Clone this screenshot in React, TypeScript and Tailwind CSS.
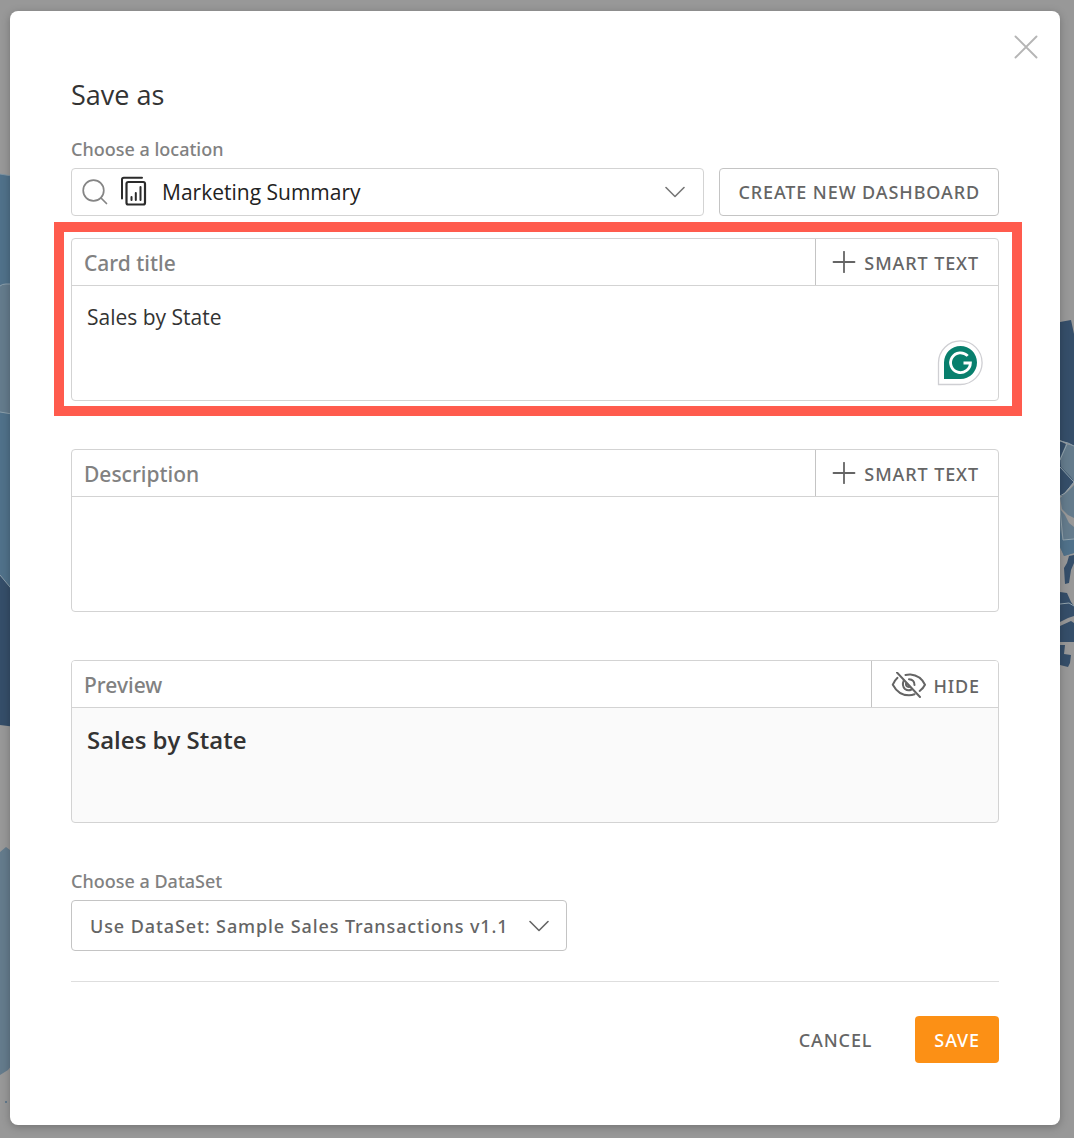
import React, { useState } from 'react';

function MapLeft() {
  return (
    <svg className="absolute left-0 top-0" width="24" height="1138" viewBox="0 0 24 1138" aria-hidden="true">
      <path d="M0 174 L24 178 V620 H0Z" fill="#50718a" />
      <path d="M0 174 L24 178" stroke="#7f95a3" />
      <path d="M0 286 Q2 284 6 284 H24 V416 L0 412Z" fill="#647b8c" />
      <path d="M0 286 Q2 284 6 284 H24 M0 412 L24 416" fill="none" stroke="#8b9eaa" strokeWidth="1" />
      <path d="M0 575 L24 604 V728 L0 725Z" fill="#354e69" />
      <path d="M0 575 L24 604" stroke="#8b9eaa" />
      <path d="M0 852 L6 847 L10 850 L24 853 V1050 L8 1070 L0 1075Z" fill="#647b8c" />
      <circle cx="6" cy="1102" r="1" fill="#50718a" />
    </svg>
  );
}

function MapRight() {
  return (
    <svg className="absolute right-0 top-0" width="24" height="1138" viewBox="0 0 24 1138" aria-hidden="true">
      <path d="M0 326 L10 322 L21 320 L24 334 V446 L10 440 H0Z" fill="#354e69" />
      <path d="M0 440 L10 441 L16 444 L14 452 L24 482 L12 496 H0Z" fill="#354e69" />
      <path d="M16 444 L24 446 V481 L20 476 L11 467 L10 458Z" fill="#647b8c" />
      <path d="M24 485 L17 492 L10 498 L12 509 L18 515 L24 518Z" fill="#647b8c" />
      <path d="M10 509 L15 515 L19 523 L24 527 V553 L14 556 L10 547Z" fill="#647b8c" />
      <path d="M10 530 L13 540 L24 539 V553 L14 556 L10 547Z" fill="#50718a" />
      <path d="M10 441 L18 443 L24 446 M17 444 L13 453 L10 460 M10 467 L24 482 L15 493 L10 496 M10 509 L13 540 L24 539" fill="none" stroke="#93a4ae" />
      <path d="M19 556 L24 555 V563 L21 570 L19 583 L15 584 L14 568 L17 563Z" fill="#354e69" />
      <path d="M10 592 L17 593 L21 602 L24 606 V642 H10Z" fill="#354e69" />
      <path d="M10 604 L19 603 L24 606" fill="none" stroke="#93a4ae" />
      <path d="M10 622 L18 618 L24 616 V623 L21 621 L10 626Z" fill="#989898" />
      <path d="M10 645 L15 645 L14 654 L21 655 L20 663 L18 667 L10 665Z" fill="#354e69" />
    </svg>
  );
}

function PlusIcon() {
  return (
    <svg width="24" height="24" viewBox="0 0 24 24" fill="none" stroke="currentColor" strokeWidth="1.8" strokeLinecap="round" aria-hidden="true">
      <path d="M12 0.8V21.2M1.5 11H22.5" />
    </svg>
  );
}

function ChevronIcon({ className }: { className?: string }) {
  return (
    <svg className={className} width="20" height="12" viewBox="0 0 20 12" fill="none" stroke="currentColor" strokeWidth="1.6" strokeLinecap="round" strokeLinejoin="round" aria-hidden="true">
      <path d="M1 1.5L10 10.5L19 1.5" />
    </svg>
  );
}

function SearchIcon() {
  return (
    <svg className="shrink-0 text-[#858585]" width="26" height="26" viewBox="0 0 26 26" fill="none" stroke="currentColor" strokeWidth="1.7" strokeLinecap="round" aria-hidden="true">
      <circle cx="11.5" cy="11.5" r="10.3" />
      <path d="M19 19L24.5 24.5" />
    </svg>
  );
}

function DashboardIcon() {
  return (
    <svg className="shrink-0 text-[#2b2b2b]" width="28" height="32" viewBox="0 0 28 32" fill="none" stroke="currentColor" strokeWidth="2" strokeLinecap="round" aria-hidden="true">
      <path d="M2 22.5V3.5Q2 1.7 3.8 1.7H22" />
      <rect x="6.5" y="6" width="18.5" height="22.5" rx="1.8" strokeWidth="2.2" />
      <path d="M11.5 21V24M15.8 17V24M20.5 11V24" />
    </svg>
  );
}

function HideIcon() {
  return (
    <svg width="36" height="28" viewBox="0 0 36 28" fill="none" stroke="currentColor" strokeWidth="2" strokeLinecap="round" aria-hidden="true">
      <path d="M7 0.5L30 25" />
      <path d="M7.5 5.8Q4.5 8.500 2.800 12.700Q8.500 23.300 19 23.300Q22 23.300 24.500 22.300" />
      <path d="M15.500 3Q18 2.500 20.500 2.600Q30.500 3.500 35 12.700Q33.200 16.300 29.700 19" />
      <path d="M13.800 8.500Q11.500 13.500 15 17Q18 19.300 21.500 17.500" />
      <path d="M19 7.200Q24.500 7.500 24.500 13" />
      <path d="M16 11.500Q15.700 14.500 19 15" />
    </svg>
  );
}

function GrammarlyBadge() {
  return (
    <svg width="46" height="46" viewBox="0 0 46 46" fill="none" aria-hidden="true">
      <path d="M1.5 44.5V22.5A21.800 21.800 0 1 1 23.300 44.5Z" fill="#fff" stroke="#cfcfd3" strokeWidth="1.3" />
      <path d="M7 39V22.5A16.500 16.500 0 1 1 23.500 39Z" fill="#087f6d" />
      <path d="M30.700 15.900A9.900 9.900 0 1 0 33.400 23H26.500" stroke="#fff" strokeWidth="2.8" />
    </svg>
  );
}

type FieldCardProps = {
  id: string;
  label: string;
  value: string;
  onChange: (value: string) => void;
  children?: React.ReactNode;
};

function FieldCard({ id, label, value, onChange, children }: FieldCardProps) {
  return (
    <div className="relative rounded-sm border border-[#d3d3d3]">
      <div className="flex h-[47px] items-stretch border-b border-[#d3d3d3]">
        <label htmlFor={id} className="flex flex-1 items-center pt-1 pl-3 font-['Noto_Sans',sans-serif] text-[21px] font-medium text-[#818181]">
          {label}
        </label>
        <button type="button" className="flex items-center gap-2 border-l border-[#c4c4c4] px-4 pt-0.5 pr-[19px] font-['Noto_Sans',sans-serif] text-lg font-medium tracking-wider text-[#656565]">
          <PlusIcon />
          SMART TEXT
        </button>
      </div>
      <textarea
        id={id}
        value={value}
        onChange={(e) => onChange(e.target.value)}
        className="block h-[114px] w-full resize-none px-[15px] py-4 text-[21px] leading-[30px] text-[#333] outline-none"
      />
      {children}
    </div>
  );
}

export default function App() {
  const [location, setLocation] = useState('Marketing Summary');
  const [title, setTitle] = useState('Sales by State');
  const [description, setDescription] = useState('');
  const [showPreview, setShowPreview] = useState(true);

  return (
    <div className="relative min-h-screen overflow-hidden bg-[#989898] pt-[11px] pr-[14px] pb-[13px] pl-[10px] font-['Open_Sans',sans-serif]">
      <MapLeft />
      <MapRight />

      <main role="dialog" aria-labelledby="dialog-title" className="relative rounded-lg bg-white px-[61px] pt-[60px] pb-[62px] shadow-[0_2px_8px_rgba(0,0,0,0.25)]">
        <button type="button" aria-label="Close" className="absolute top-6 right-[22px] text-[#b5b5b5]">
          <svg width="24" height="24" viewBox="0 0 24 24" fill="none" stroke="currentColor" strokeWidth="1.9" strokeLinecap="round">
            <path d="M1.5 1.5L22.5 22.5M22.5 1.5L1.5 22.5" />
          </svg>
        </button>

        <h1 id="dialog-title" className="text-[27px] leading-12 text-[#333]">Save as</h1>

        {/* Location */}
        <label htmlFor="location" className="mt-[18px] block font-['Noto_Sans',sans-serif] text-lg leading-6 font-medium text-[#818181]">
          Choose a location
        </label>
        <div className="mt-[7px] flex gap-[15px]">
          <div className="flex h-12 flex-1 items-center rounded-sm border border-[#d3d3d3] pr-[18px] pl-[10px]">
            <SearchIcon />
            <span className="ml-3 flex">
              <DashboardIcon />
            </span>
            <input
              id="location"
              type="text"
              value={location}
              onChange={(e) => setLocation(e.target.value)}
              className="ml-[14px] min-w-0 flex-1 pt-0.5 text-[21px] text-[#222] outline-none"
            />
            <button type="button" aria-label="Show locations" className="text-[#777]">
              <ChevronIcon />
            </button>
          </div>
          <button type="button" className="h-12 rounded-sm border border-[#c4c4c4] px-[18px] font-['Noto_Sans',sans-serif] text-lg font-medium tracking-wider text-[#656565]">
            CREATE NEW DASHBOARD
          </button>
        </div>

        {/* Text fields */}
        <div className="mt-[22px] flex flex-col gap-12">
          <FieldCard id="card-title" label="Card title" value={title} onChange={setTitle}>
            <button type="button" aria-label="Open Grammarly" className="absolute right-[15px] bottom-[14px]">
              <GrammarlyBadge />
            </button>
            <div className="pointer-events-none absolute -top-[17px] -right-6 -bottom-4 -left-[18px] border-10 border-[#ff5b4d]" />
          </FieldCard>

          <FieldCard id="description" label="Description" value={description} onChange={setDescription} />

          {/* Preview */}
          <section className="overflow-hidden rounded-sm border border-[#d3d3d3] bg-[#fafafa]">
            <div className="flex h-[47px] items-stretch border-b border-[#d3d3d3] bg-white">
              <h2 className="flex flex-1 items-center pt-1 pl-3 font-['Noto_Sans',sans-serif] text-[21px] font-medium text-[#818181]">Preview</h2>
              <button
                type="button"
                onClick={() => setShowPreview(!showPreview)}
                className="flex items-center gap-[7px] border-l border-[#c4c4c4] px-[18px] pt-1 font-['Noto_Sans',sans-serif] text-lg font-medium tracking-wider text-[#656565]"
              >
                <HideIcon />
                HIDE
              </button>
            </div>
            {showPreview && <p className="h-[114px] px-[15px] py-4 text-2xl font-semibold text-[#333]">{title}</p>}
          </section>
        </div>

        {/* DataSet */}
        <label htmlFor="dataset" className="mt-[46px] block font-['Noto_Sans',sans-serif] text-lg leading-6 font-medium text-[#818181]">
          Choose a DataSet
        </label>
        <div className="relative mt-[7px] w-[496px] max-w-full">
          <select
            id="dataset"
            className="h-[51px] w-full appearance-none rounded-sm border border-[#c4c4c4] bg-white pr-12 pl-[18px] font-['Noto_Sans',sans-serif] text-lg font-medium tracking-wider text-[#656565]"
          >
            <option>Use DataSet: Sample Sales Transactions v1.1</option>
          </select>
          <ChevronIcon className="pointer-events-none absolute top-5 right-[18px] text-[#656565]" />
        </div>

        {/* Actions */}
        <div className="mt-[30px] flex items-center justify-end gap-6 border-t border-[#dedede] pt-[34px] font-['Noto_Sans',sans-serif]">
          <button type="button" className="h-[47px] px-[19px] text-lg font-medium tracking-wider text-[#656565]">
            CANCEL
          </button>
          <button type="button" className="h-[47px] rounded-sm bg-[#fc9015] px-[19px] text-lg font-medium tracking-wider text-white">
            SAVE
          </button>
        </div>
      </main>
    </div>
  );
}
